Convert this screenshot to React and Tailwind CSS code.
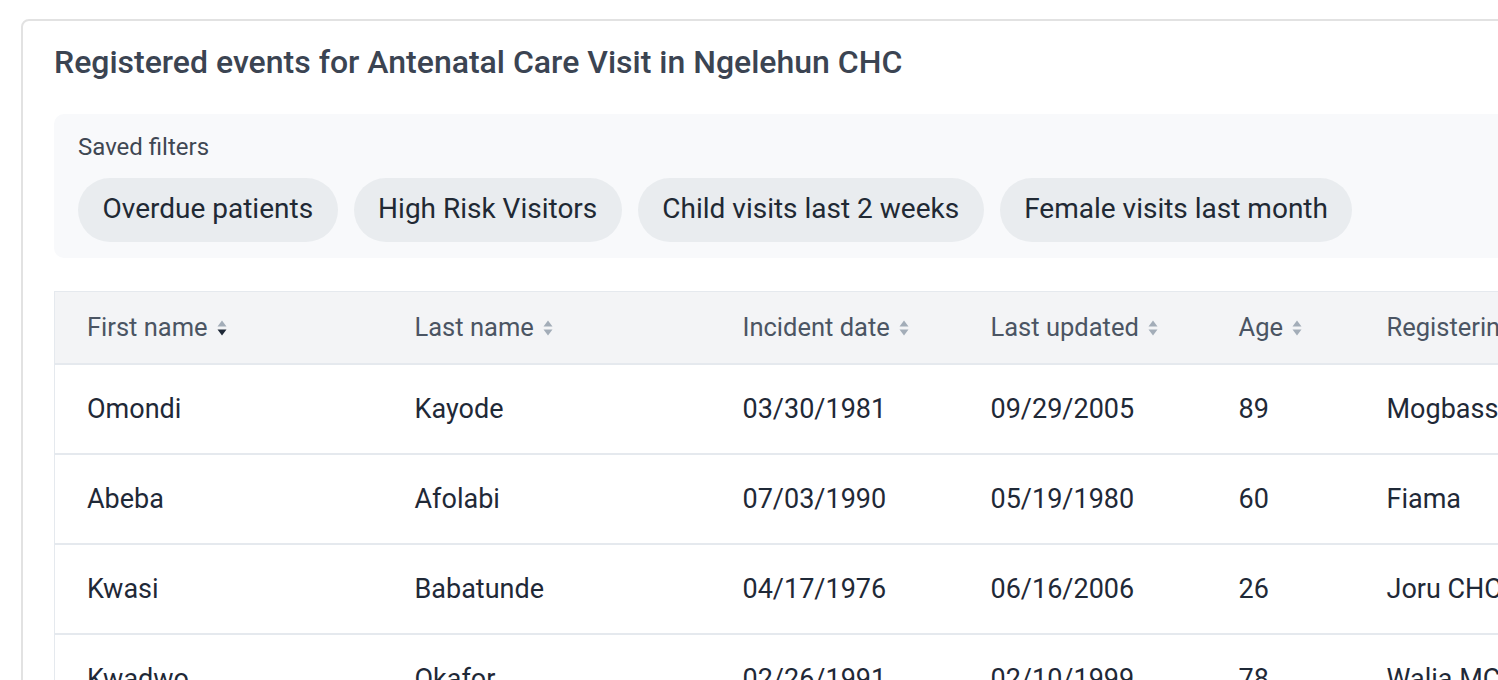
import React from 'react';

const filters = ['Overdue patients', 'High Risk Visitors', 'Child visits last 2 weeks', 'Female visits last month'];

const columns = [
    { label: 'First name', width: 'w-[328px]', active: true },
    { label: 'Last name', width: 'w-[328px]' },
    { label: 'Incident date', width: 'w-[248px]' },
    { label: 'Last updated', width: 'w-[248px]' },
    { label: 'Age', width: 'w-[148px]' },
    { label: 'Registering unit', width: 'w-[300px]', noSort: true },
];

const rows = [
    ['Omondi', 'Kayode', '03/30/1981', '09/29/2005', '89', 'Mogbassi CHP'],
    ['Abeba', 'Afolabi', '07/03/1990', '05/19/1980', '60', 'Fiama'],
    ['Kwasi', 'Babatunde', '04/17/1976', '06/16/2006', '26', 'Joru CHC'],
    ['Kwadwo', 'Okafor', '02/26/1991', '02/10/1999', '78', 'Walia MCHP'],
];

function SortIcon({ active }) {
    return (
        <svg width="12" height="22" viewBox="0 0 12 22" className="ml-[8px] mt-[2px] shrink-0">
            <path d="M1.5 9.5 L6 3.5 L10.5 9.5 Z" fill="#a3adb8" />
            <path d="M1.5 12.5 L6 18.5 L10.5 12.5 Z" fill={active ? '#1f2937' : '#a3adb8'} />
        </svg>
    );
}

export default function App() {
    return (
        <div className="w-[1498px] h-[680px] overflow-hidden bg-white font-['Roboto',sans-serif]">
            <div className="ml-[21px] mt-[19px] w-[1700px] border-2 border-[#e2e2e2] rounded-[8px] pl-[31px] pt-[23px] pb-10">
                {/* Title */}
                <h1 className="text-[32px] leading-[36px] font-medium text-[#3b4452] mb-[34px]">
                    Registered events for Antenatal Care Visit in Ngelehun CHC
                </h1>

                {/* Saved filters */}
                <div className="bg-[#f8f9fb] rounded-[10px] px-6 pt-[19px] pb-4">
                    <div className="text-[24px] leading-[28px] text-[#3f4753]">Saved filters</div>
                    <div className="flex gap-4 mt-[17px]">
                        {filters.map(f => (
                            <button
                                key={f}
                                className="h-16 px-[24.5px] pb-[2px] rounded-full bg-[#e9ecef] text-[28px] text-[#212934]"
                            >
                                {f}
                            </button>
                        ))}
                    </div>
                </div>

                {/* Table */}
                <table className="mt-[33px] border-collapse border border-[#e5e9ee] text-left">
                    <thead>
                        <tr className="bg-[#f3f4f6] h-[72px] border-b-2 border-[#e5e9ee]">
                            {columns.map(c => (
                                <th key={c.label} className={`${c.width} pl-[32px] font-normal`}>
                                    <div className="flex items-center text-[25.5px] text-[#4b5563] whitespace-nowrap">
                                        {c.label}
                                        {!c.noSort && <SortIcon active={c.active} />}
                                    </div>
                                </th>
                            ))}
                        </tr>
                    </thead>
                    <tbody>
                        {rows.map((r, i) => (
                            <tr key={i} className="h-[90px] border-b-2 border-[#e5e9ee]">
                                {r.map((cell, j) => (
                                    <td key={j} className="pl-[32px] pt-[1px] text-[27px] text-[#1f2937] whitespace-nowrap">
                                        {cell}
                                    </td>
                                ))}
                            </tr>
                        ))}
                    </tbody>
                </table>
            </div>
        </div>
    );
}
